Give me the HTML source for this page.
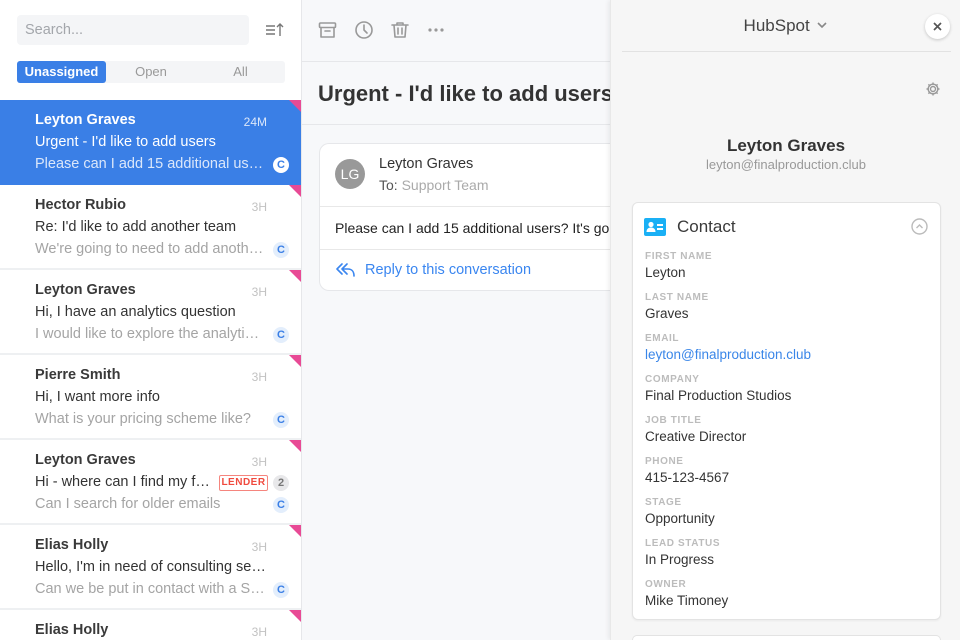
<!DOCTYPE html>
<html><head><meta charset="utf-8">
<style>
*{box-sizing:border-box;margin:0;padding:0}
html{width:960px;height:640px;overflow:hidden}
body{width:960px;height:640px;overflow:hidden;font-family:"Liberation Sans",sans-serif;background:#f7f8fa;position:relative;color:#333}
.abs{position:absolute}
#left{left:0;top:0;width:302px;height:640px;background:#fff;border-right:1px solid #e6e7ea;overflow:hidden}
.search{left:17px;top:15px;width:232px;height:30px;background:#f4f5f7;border-radius:4px;color:#a3a6ab;font-size:14.5px;line-height:31px;padding-left:8px}
.tabs{left:17px;top:61px;width:268px;height:22px;background:#f4f5f7;border-radius:3px}
.tab{position:absolute;top:0;height:22px;line-height:22px;font-size:13px;text-align:center;color:#999}
.item{position:absolute;left:0;width:301px;height:85px;border-bottom:2px solid #eef0f2;background:#fff}
.item.sel{background:#3a7fe6;border-bottom:none}
.item .tri{position:absolute;right:0;top:0;width:0;height:0;border-top:12px solid #e84a95;border-left:12px solid transparent}
.item .n{position:absolute;left:35px;top:12px;font-size:14.5px;font-weight:bold;color:#3a3a3a}
.item .t{position:absolute;right:34px;top:15px;font-size:12px;color:#c2c2c2}
.item .s{position:absolute;left:35px;top:34px;font-size:14.5px;color:#333;white-space:nowrap;width:232px;overflow:hidden;text-overflow:ellipsis}
.item .p{position:absolute;left:35px;top:56px;font-size:14.5px;color:#a4a4a4;white-space:nowrap;width:230px;overflow:hidden;text-overflow:ellipsis}
.item .c{position:absolute;left:273px;top:57px;width:16px;height:16px;border-radius:8px;background:#e3eefc;color:#3a7fe6;font-size:11px;font-weight:bold;text-align:center;line-height:16px}
.item.sel .n,.item.sel .s{color:#fff}.item.sel .t,.item.sel .p{color:#dbe7fa}
.item.sel .c{background:#fff;color:#3a7fe6}
.lender{position:absolute;left:219px;top:35px;width:49px;height:16px;border:1px solid #f5857e;border-radius:2px;color:#f04a3e;font-size:10px;font-weight:bold;letter-spacing:.5px;text-align:center;line-height:14px}
.two{position:absolute;left:273px;top:35px;width:16px;height:16px;border-radius:8px;background:#e8e8ea;color:#777;font-size:11px;font-weight:bold;text-align:center;line-height:16px}
#right{left:610px;top:0;width:350px;height:640px;background:#f6f6f6;box-shadow:-2px 0 4px rgba(0,0,0,.06);border-left:1px solid #e8e8e8;overflow:hidden}
.lab{position:absolute;left:12px;font-size:10px;letter-spacing:.6px;color:#bcbcbc;font-weight:bold}
.val{position:absolute;left:12px;font-size:13.5px;color:#333}
</style></head><body>
<div id="left" class="abs">
 <div class="abs search">Search...</div>
 <svg class="abs" style="left:265px;top:22px" width="20" height="16" viewBox="0 0 20 16" fill="none" stroke="#777" stroke-width="1.4"><path d="M1 4h9M1 8h9M1 12h9M15 14V2M12 5l3-3 3 3"/></svg>
 <div class="abs tabs">
  <div class="tab" style="left:0;width:89px;background:#3a7fe6;color:#fff;border-radius:3px;font-weight:bold">Unassigned</div>
  <div class="tab" style="left:89px;width:90px">Open</div>
  <div class="tab" style="left:179px;width:89px">All</div>
 </div>
 <div class="item sel" style="top:100px"><div class="tri"></div><div class="n">Leyton Graves</div><div class="t">24M</div><div class="s">Urgent - I'd like to add users</div><div class="p">Please can I add 15 additional users?</div><div class="c">C</div></div>
 <div class="item" style="top:185px"><div class="tri"></div><div class="n">Hector Rubio</div><div class="t">3H</div><div class="s">Re: I'd like to add another team</div><div class="p">We're going to need to add another team</div><div class="c">C</div></div>
 <div class="item" style="top:270px"><div class="tri"></div><div class="n">Leyton Graves</div><div class="t">3H</div><div class="s">Hi, I have an analytics question</div><div class="p">I would like to explore the analytics tools</div><div class="c">C</div></div>
 <div class="item" style="top:355px"><div class="tri"></div><div class="n">Pierre Smith</div><div class="t">3H</div><div class="s">Hi, I want more info</div><div class="p">What is your pricing scheme like?</div><div class="c">C</div></div>
 <div class="item" style="top:440px"><div class="tri"></div><div class="n">Leyton Graves</div><div class="t">3H</div><div class="s" style="width:178px">Hi - where can I find my files please</div><div class="lender">LENDER</div><div class="two">2</div><div class="p">Can I search for older emails</div><div class="c">C</div></div>
 <div class="item" style="top:525px"><div class="tri"></div><div class="n">Elias Holly</div><div class="t">3H</div><div class="s">Hello, I'm in need of consulting services</div><div class="p">Can we be put in contact with a Specialist</div><div class="c">C</div></div>
 <div class="item" style="top:610px;height:30px;border-bottom:none"><div class="tri"></div><div class="n">Elias Holly</div><div class="t">3H</div></div>
</div>

<div class="abs" style="left:302px;top:61px;width:308px;height:1px;background:#e6e7ea"></div>
<div class="abs" style="left:302px;top:124px;width:308px;height:1px;background:#e6e7ea"></div>
<svg class="abs" style="left:318px;top:20px" width="130" height="20" viewBox="0 0 130 20" fill="none" stroke="#999" stroke-width="1.6" stroke-linecap="round" stroke-linejoin="round">
 <rect x="1.5" y="3" width="16" height="4.5" rx="1"/><path d="M3 7.5v9.5h13V7.5M7 11h5"/>
 <circle cx="46" cy="10" r="8"/><path d="M46 5v5l3 3"/>
 <path d="M74 5h16M79 5V3h6v2M76 5l1 12h10l1-12M80 8v6M84 8v6"/>
 <circle cx="112" cy="10" r=".8" fill="#999"/><circle cx="118" cy="10" r=".8" fill="#999"/><circle cx="124" cy="10" r=".8" fill="#999"/>
</svg>
<div class="abs" style="left:318px;top:81px;font-size:22px;font-weight:bold;color:#333;white-space:nowrap;width:292px;overflow:hidden">Urgent - I'd like to add users</div>
<div class="abs" style="left:319px;top:143px;width:291px;height:148px;background:#fff;border:1px solid #e6e7ea;border-right:none;border-radius:10px 0 0 10px;overflow:hidden">
 <div class="abs" style="left:15px;top:15px;width:30px;height:30px;border-radius:15px;background:#999;color:#fff;font-size:14px;text-align:center;line-height:30px">LG</div>
 <div class="abs" style="left:59px;top:12px;font-size:14.5px;color:#333">Leyton Graves</div>
 <div class="abs" style="left:59px;top:33px;font-size:14px;color:#555">To: <span style="color:#aaa">Support Team</span></div>
 <div class="abs" style="left:0;top:62px;width:291px;height:1px;background:#e8e8e8"></div>
 <div class="abs" style="left:15px;top:76px;font-size:14px;color:#222;white-space:nowrap">Please can I add 15 additional users? It's go</div>
 <div class="abs" style="left:0;top:105px;width:291px;height:1px;background:#e8e8e8"></div>
 <svg class="abs" style="left:16px;top:119px" width="20" height="14" viewBox="0 0 20 14" fill="none" stroke="#3a86f0" stroke-width="1.6" stroke-linecap="round" stroke-linejoin="round"><path d="M6 1L1 6l5 5M11 1L6 6l5 5M6 6h6c4 0 6 3 6 7"/></svg>
 <div class="abs" style="left:45px;top:118px;font-size:14.5px;color:#3a86f0">Reply to this conversation</div>
</div>

<div id="right" class="abs">
 <div class="abs" style="left:0;top:16px;width:350px;text-align:center;font-size:17px;color:#444">HubSpot <svg width="12" height="8" viewBox="0 0 12 8" style="margin-left:2px;vertical-align:2px" fill="none" stroke="#888" stroke-width="1.6"><path d="M2 2l4 4 4-4"/></svg></div>
 <div class="abs" style="left:314px;top:14px;width:25px;height:25px;border-radius:13px;background:#fff;box-shadow:0 1px 3px rgba(0,0,0,.2)"><svg width="25" height="25" viewBox="0 0 25 25" stroke="#555" stroke-width="1.7"><path d="M9 9l7 7M16 9l-7 7"/></svg></div>
 <div class="abs" style="left:11px;top:51px;width:329px;height:1px;background:#e2e2e2"></div>
 <svg class="abs" style="left:314px;top:81px" width="16" height="16" viewBox="0 0 16 16" fill="none" stroke="#999" stroke-width="1.4"><circle cx="8" cy="8" r="2.5"/><path d="M8 1.5v2M8 12.5v2M1.5 8h2M12.5 8h2M3.4 3.4l1.4 1.4M11.2 11.2l1.4 1.4M3.4 12.6l1.4-1.4M11.2 4.8l1.4-1.4"/><circle cx="8" cy="8" r="4.8"/></svg>
 <div class="abs" style="left:0;top:136px;width:350px;text-align:center;font-size:17px;font-weight:bold;color:#333">Leyton Graves</div>
 <div class="abs" style="left:0;top:157px;width:350px;text-align:center;font-size:13px;color:#999">leyton@finalproduction.club</div>
 <div class="abs" style="left:21px;top:202px;width:309px;height:418px;background:#fff;border:1px solid #e3e3e3;border-radius:6px;box-shadow:0 1px 2px rgba(0,0,0,.05)">
  <svg class="abs" style="left:11px;top:15px" width="22" height="18" viewBox="0 0 22 18"><rect width="22" height="18" rx="2" fill="#1ab0f5"/><circle cx="7" cy="6.5" r="2.6" fill="#fff"/><path d="M2.5 14c0-3 2-4.5 4.5-4.5s4.5 1.5 4.5 4.5z" fill="#fff"/><rect x="13" y="6" width="6" height="2" fill="#fff"/><rect x="13" y="10" width="6" height="2" fill="#fff"/></svg>
  <div class="abs" style="left:44px;top:14px;font-size:17px;color:#3a3a3a">Contact</div>
  <svg class="abs" style="left:278px;top:15px" width="17" height="17" viewBox="0 0 17 17" fill="none" stroke="#bbb" stroke-width="1.4"><circle cx="8.5" cy="8.5" r="7.5"/><path d="M5.5 10l3-3 3 3"/></svg>
  <div class="lab" style="top:48px">FIRST NAME</div><div class="val" style="top:62px">Leyton</div>
  <div class="lab" style="top:89px">LAST NAME</div><div class="val" style="top:103px">Graves</div>
  <div class="lab" style="top:130px">EMAIL</div><div class="val" style="top:144px;color:#3a86e8">leyton@finalproduction.club</div>
  <div class="lab" style="top:171px">COMPANY</div><div class="val" style="top:185px">Final Production Studios</div>
  <div class="lab" style="top:212px">JOB TITLE</div><div class="val" style="top:226px">Creative Director</div>
  <div class="lab" style="top:253px">PHONE</div><div class="val" style="top:267px">415-123-4567</div>
  <div class="lab" style="top:294px">STAGE</div><div class="val" style="top:308px">Opportunity</div>
  <div class="lab" style="top:335px">LEAD STATUS</div><div class="val" style="top:349px">In Progress</div>
  <div class="lab" style="top:376px">OWNER</div><div class="val" style="top:390px">Mike Timoney</div>
 </div>
 <div class="abs" style="left:21px;top:635px;width:309px;height:5px;background:#fff;border:1px solid #e3e3e3;border-bottom:none;border-radius:6px 6px 0 0"></div>
</div>
</body></html>
